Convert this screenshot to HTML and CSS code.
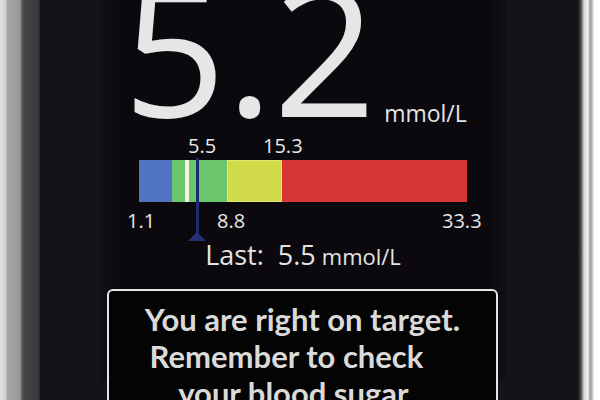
FILE: index.html
```html
<!DOCTYPE html>
<html lang="en">
<head>
    <meta charset="UTF-8">
    <meta name="viewport" content="width=device-width, initial-scale=1.0">
    <title>Glucose Meter</title>
    <link rel="stylesheet" href="styles.css">
</head>
<body>

<div class="phone">
    <div class="rimLeft"></div>
    <div class="bezel">
        <div class="screen">
            <div class="reading">
                <span class="value">5.2</span>
                <span class="unit">mmol/L</span>
            </div>

            <div class="gauge">
                <span class="tick top" style="left: 49px">5.5</span>
                <span class="tick top" style="left: 124px">15.3</span>
                <div class="bar">
                    <div class="seg low" style="width: 33px"></div>
                    <div class="seg target" style="width: 55px">
                        <span class="goal" style="left: 13px"></span>
                    </div>
                    <div class="seg high" style="width: 55px"></div>
                    <div class="seg danger" style="flex: 1"></div>
                </div>
                <span class="tick bottom" style="left: -12px">1.1</span>
                <span class="tick bottom" style="left: 78px">8.8</span>
                <span class="tick bottom" style="left: 303px">33.3</span>
                <div class="marker" style="left: 57px"></div>
            </div>

            <div class="last">
                <span class="lastLabel">Last:</span>
                <span class="lastValue">5.5</span>
                <span class="lastUnit">mmol/L</span>
            </div>

            <div class="message">
                <p>
                    <span class="line">You are right on target.</span>
                    <span class="line second">Remember to check</span>
                    <span class="line third">your blood sugar.</span>
                </p>
            </div>
        </div>
    </div>
    <div class="rimRight"></div>
</div>

</body>
</html>
```

FILE: styles.css
```css
body {
    margin: 0;
    padding: 0;
    background-color: #151318;
    font-family: 'Open Sans', 'DejaVu Sans', sans-serif;
    color: #e4e4e4;
    overflow: hidden;
}
.phone {
    display: flex;
    height: 400px;
    overflow: hidden;
}
/* metal edges of the device */
.rimLeft {
    width: 40px;
    background: linear-gradient(to right, #e2e2e2 0, #d0d0d0 6px, #a4a4a4 7px, #9a9a9a 20px, #5a5a5c 22px, #444346 25px, #3b3a3e 38px, #222025 40px);
}
.rimRight {
    width: 22px;
    background: linear-gradient(to right, #1a181c 0, #4a4a4c 3px, #d8d8d8 6px, #f2f2f2 10px, #9c9c9c 12px, #b8b8b8 14px, #fafafa 16px, #ffffff 22px);
}
.bezel {
    flex: 1;
    background-color: #151318;
}
.screen {
    width: 406px;
    margin-left: 60px;
    height: 400px;
    background: linear-gradient(to right, #121015 0, #0b090d 20px, #0b090d 386px, #121015 406px);
}
/* big reading */
.reading {
    display: flex;
    align-items: baseline;
    height: 140px;
    margin-top: -20px;
    padding-left: 23px;
}
.value {
    font-size: 180px;
    line-height: 136px;
    color: #e6e6e6;
}
.unit {
    font-size: 23px;
    margin-left: 8px;
    position: relative;
    top: 5px;
}
/* range bar */
.gauge {
    position: relative;
    width: 328px;
    margin: 0 auto;
    padding: 40px 0 38px;
}
.tick {
    position: absolute;
    font-size: 20px;
    line-height: 20px;
    color: #e8e8e8;
}
.tick.top {
    top: 16px;
}
.tick.bottom {
    top: 91px;
}
.bar {
    display: flex;
    height: 42px;
}
.seg {
    position: relative;
}
.low {
    background-color: #5073c2;
}
.target {
    background-color: #6cc66c;
}
.goal {
    position: absolute;
    top: 0;
    width: 4px;
    height: 42px;
    background-color: #f2f5e6;
}
.high {
    background-color: #d2dc4a;
    box-shadow: inset 0 0 0 1px #e0e872;
}
.danger {
    background-color: #d73434;
}
.marker {
    position: absolute;
    top: 38px;
    width: 3px;
    height: 75px;
    background-color: #1f2b6e;
}
.marker::after {
    content: "";
    position: absolute;
    left: -8px;
    bottom: -8px;
    border-left: 9px solid transparent;
    border-right: 9px solid transparent;
    border-bottom: 9px solid #24307a;
}
/* last reading */
.last {
    display: flex;
    align-items: baseline;
    justify-content: center;
    height: 30px;
    line-height: 30px;
}
.lastLabel {
    font-size: 27px;
    margin-right: 14px;
}
.lastValue {
    font-size: 27px;
    margin-right: 6px;
}
.lastUnit {
    font-size: 22px;
}
/* message box */
.message {
    margin: 19px 0 0 7px;
    width: 387px;
    border: 2px solid #e6e6e6;
    border-radius: 6px;
    background-color: #040404;
    padding-top: 10px;
    height: 120px;
}
.message p {
    margin: 0;
    font-family: 'Lato', 'Open Sans', sans-serif;
    font-weight: bold;
    font-size: 31px;
    line-height: 37px;
    text-align: center;
    color: #dadada;
}
.line {
    display: block;
}
.second {
    padding-right: 32px;
}
.third {
    padding-right: 12px;
}
```
